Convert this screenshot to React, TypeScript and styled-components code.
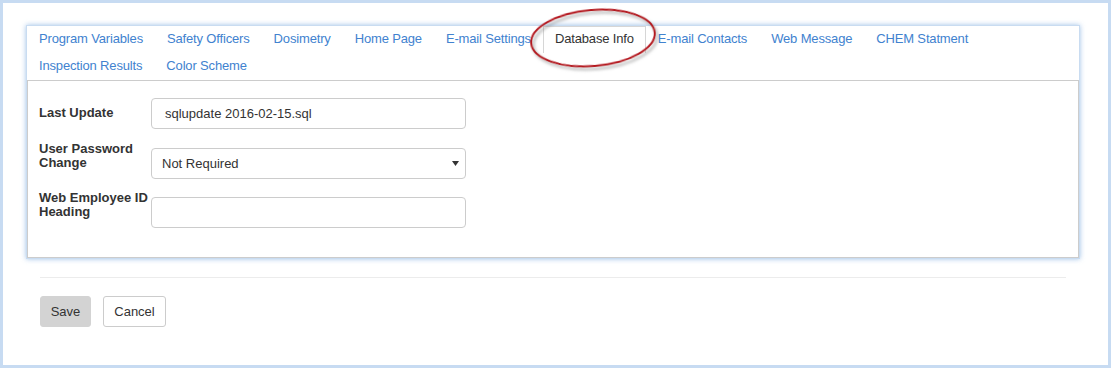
import React from "react";
import styled, { createGlobalStyle } from "styled-components";

const Global = createGlobalStyle`
  html, body { margin: 0; padding: 0; background: #fff; }
  body { font-family: "Liberation Sans", Arial, sans-serif; font-size: 13px; color: #333; }
  * { box-sizing: border-box; }
`;

const Frame = styled.div`
  position: relative;
  width: 1111px;
  height: 368px;
  border: 3px solid #c7dbf2;
  background: #fff;
  padding: 22px 29px 0 23px;
`;

const Panel = styled.div`
  width: 1054px;
  border: 1px solid #c9dcf1;
  box-shadow: 0 0 5px rgba(130, 175, 225, 0.75);
  background: #fff;
`;

const TabList = styled.ul`
  display: flex;
  flex-wrap: wrap;
  list-style: none;
  margin: 0;
  padding: 0;
`;

const Tab = styled.li<{ $active?: boolean }>`
  padding: 3px 11px 6px;
  line-height: 17px;
  font-size: 13px;
  letter-spacing: -0.16px;
  border: 1px solid ${(p) => (p.$active ? "#d6d6d6" : "transparent")};
  border-bottom: 0;
  color: ${(p) => (p.$active ? "#333" : "#4182cf")};
  white-space: nowrap;
  cursor: pointer;
`;

const Content = styled.div`
  border: 1px solid #ccc;
  padding: 17px 11px 29px;
  display: flex;
  flex-direction: column;
  gap: 18px;
`;

const FormRow = styled.div`
  display: flex;
  align-items: flex-start;
  &:first-child {
    margin-bottom: 1px;
  }
`;

const Label = styled.label<{ $multi?: boolean }>`
  width: 112px;
  font-weight: bold;
  font-size: 13px;
  line-height: 14px;
  color: #333;
  margin-top: ${(p) => (p.$multi ? "-6px" : "8px")};
`;

const TextInput = styled.input`
  width: 315px;
  height: 31px;
  border: 1px solid #ccc;
  border-radius: 4px;
  padding: 0 13px;
  font-family: "Liberation Sans", Arial, sans-serif;
  font-size: 13px;
  color: #333;
  outline: none;
`;

const SelectBox = styled.div`
  width: 315px;
  height: 31px;
  border: 1px solid #ccc;
  border-radius: 4px;
  padding: 0 6px 0 10px;
  display: flex;
  align-items: center;
  justify-content: space-between;
  font-size: 13px;
  color: #333;
`;

const Divider = styled.hr`
  margin: 18px 0 0 14px;
  width: 1026px;
  border: 0;
  border-top: 1px solid #ececec;
`;

const ButtonRow = styled.div`
  display: flex;
  gap: 12px;
  margin: 18px 0 0 14px;
`;

const Button = styled.button<{ $primary?: boolean }>`
  height: 31px;
  padding: 0 0 1px;
  font-family: "Liberation Sans", Arial, sans-serif;
  font-size: 13px;
  color: #333;
  border-radius: 3px;
  border: 1px solid ${(p) => (p.$primary ? "#d3d3d3" : "#ccc")};
  background: ${(p) => (p.$primary ? "#d3d3d3" : "#fff")};
  width: ${(p) => (p.$primary ? "51px" : "63px")};
`;

const Annotation = styled.svg`
  position: absolute;
  left: 515px;
  top: -3px;
  overflow: visible;
  pointer-events: none;
`;

const tabs = [
  "Program Variables",
  "Safety Officers",
  "Dosimetry",
  "Home Page",
  "E-mail Settings",
  "Database Info",
  "E-mail Contacts",
  "Web Message",
  "CHEM Statment",
  "Inspection Results",
  "Color Scheme",
];

export default function App() {
  return (
    <>
      <Global />
      <Frame>
        <Panel>
          <TabList>
            {tabs.map((t) => (
              <Tab key={t} $active={t === "Database Info"}>
                {t}
              </Tab>
            ))}
          </TabList>
          <Content>
            <FormRow>
              <Label>Last Update</Label>
              <TextInput defaultValue="sqlupdate 2016-02-15.sql" />
            </FormRow>
            <FormRow>
              <Label $multi>
                User Password
                <br />
                Change
              </Label>
              <SelectBox>
                <span>Not Required</span>
                <svg width="7" height="5" viewBox="0 0 7 5">
                  <path d="M0 0 H7 L3.5 5 Z" fill="#333" />
                </svg>
              </SelectBox>
            </FormRow>
            <FormRow>
              <Label $multi>
                Web Employee ID
                <br />
                Heading
              </Label>
              <TextInput />
            </FormRow>
          </Content>
        </Panel>
        <Divider />
        <ButtonRow>
          <Button $primary>Save</Button>
          <Button>Cancel</Button>
        </ButtonRow>
        <Annotation width="150" height="80" viewBox="0 0 150 80">
          <defs>
            <filter id="sh" x="-20%" y="-20%" width="140%" height="150%">
              <feDropShadow dx="2" dy="3" stdDeviation="1.5" floodColor="#777" floodOpacity="0.6" />
            </filter>
          </defs>
          <ellipse
            cx="75"
            cy="38"
            rx="62"
            ry="28"
            fill="none"
            stroke="#b3141d"
            strokeWidth="2"
            transform="rotate(-5 75 38)"
            filter="url(#sh)"
          />
        </Annotation>
      </Frame>
    </>
  );
}
